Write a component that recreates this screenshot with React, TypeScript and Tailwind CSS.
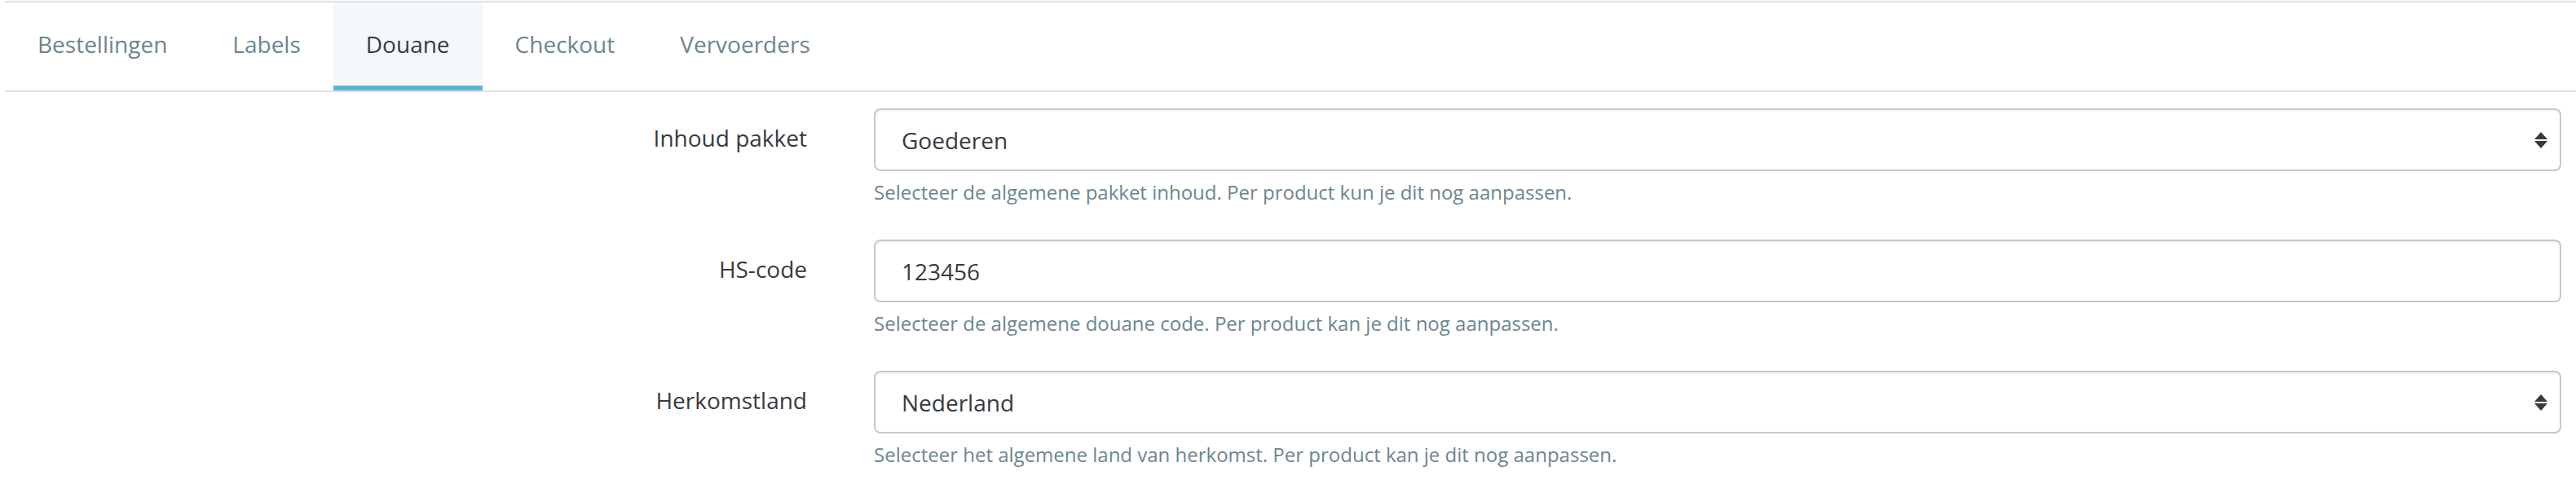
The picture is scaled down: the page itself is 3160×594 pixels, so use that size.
import React from 'react'

const tabs = ['Bestellingen', 'Labels', 'Douane', 'Checkout', 'Vervoerders']

// dubbele pijl van de select
function SelectArrows() {
  return (
    <svg className="w-[16px] h-[20px] shrink-0" viewBox="0 0 16 20" fill="#363a41">
      <polygon points="8,0 16,9 0,9" />
      <polygon points="0,11 16,11 8,20" />
    </svg>
  )
}

interface FieldProps {
  label: string
  value: string
  help: string
  select?: boolean
}

function Field({ label, value, help, select }: FieldProps) {
  return (
    <div className="flex items-start">
      <div className="w-[990px] shrink-0 pt-[15px] text-right text-[28px] leading-[42px] text-[#363a41]">
        {label}
      </div>
      <div className="flex-1 ml-[82px] mr-[18px]">
        <div className="h-[77px] flex items-center justify-between pl-[32px] pr-[15px] border-2 border-[#bbcdd2] rounded-[8px] bg-white shadow-[inset_0_2px_2px_rgba(0,0,0,0.05)]">
          <span className="text-[28px] leading-[42px] text-[#363a41]">{value}</span>
          {select && <SelectArrows />}
        </div>
        <p className="mt-[8px] text-[24px] leading-[36px] text-[#6c868e]">{help}</p>
      </div>
    </div>
  )
}

export default function App() {
  return (
    <div className="w-[3160px] h-[594px] bg-white font-['Open_Sans',sans-serif] overflow-hidden">
      {/* Tabs */}
      <div className="ml-[6px] mt-[1px] border-t-2 border-b-2 border-[#e0e0e0] flex">
        {tabs.map((t) => {
          const active = t === 'Douane'
          return (
            <div
              key={t}
              className={
                active
                  ? 'px-[40px] pt-[30px] pb-[30px] border-b-[6px] border-[#5bb5d4] bg-[#f4f8fb] text-[28px] leading-[42px] text-[#363a41]'
                  : 'px-[40px] pt-[30px] pb-[30px] border-b-[6px] border-transparent text-[28px] leading-[42px] text-[#6c868e]'
              }
            >
              {t}
            </div>
          )
        })}
      </div>

      {/* Formulier */}
      <div className="mt-[20px] flex flex-col gap-[40px]">
        <Field
          label="Inhoud pakket"
          value="Goederen"
          help="Selecteer de algemene pakket inhoud. Per product kun je dit nog aanpassen."
          select
        />
        <Field
          label="HS-code"
          value="123456"
          help="Selecteer de algemene douane code. Per product kan je dit nog aanpassen."
        />
        <Field
          label="Herkomstland"
          value="Nederland"
          help="Selecteer het algemene land van herkomst. Per product kan je dit nog aanpassen."
          select
        />
      </div>
    </div>
  )
}
